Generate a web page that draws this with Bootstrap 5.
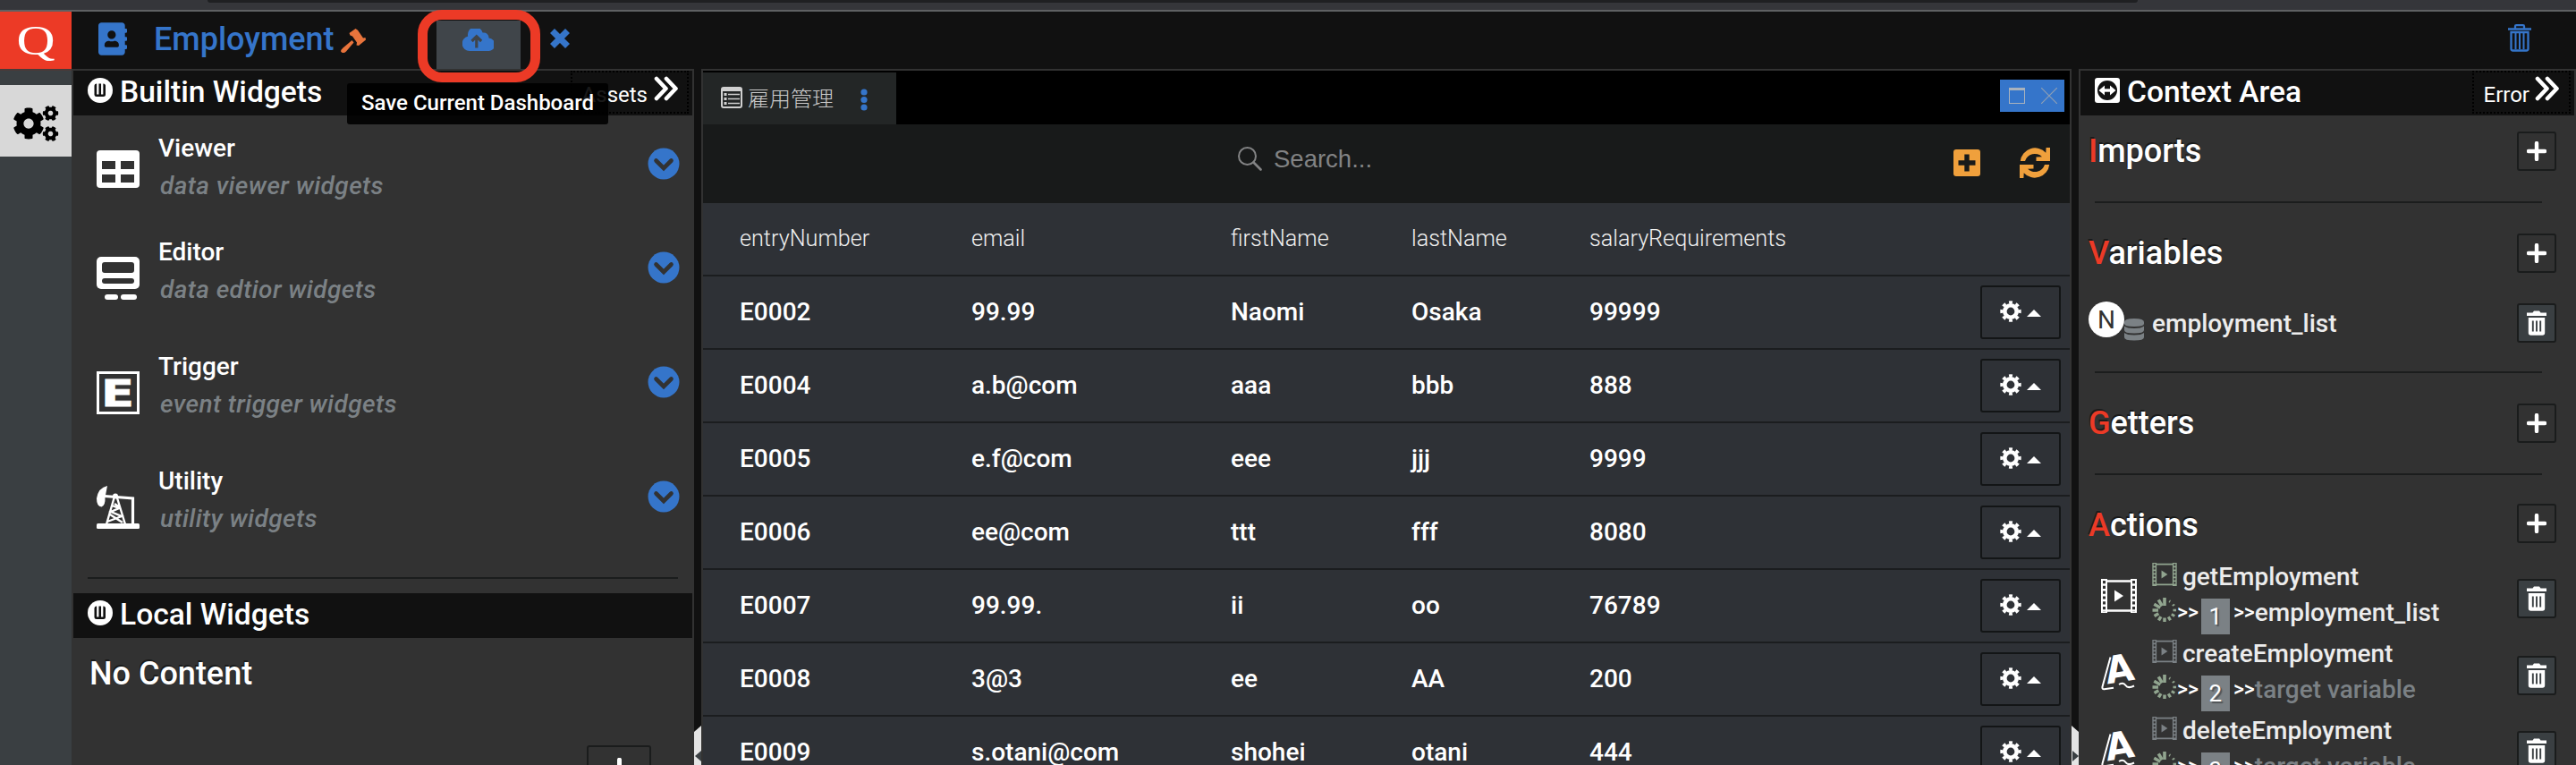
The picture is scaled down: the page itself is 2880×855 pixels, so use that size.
<!DOCTYPE html>
<html lang="ja">
<head>
<meta charset="utf-8">
<meta name="viewport" content="width=device-width, initial-scale=1">
<title>Employment</title>
<link href="https://cdn.jsdelivr.net/npm/bootstrap@5.3.0/dist/css/bootstrap.min.css" rel="stylesheet">
<style>
:root { --blue:#3575ca; --panel:#323232; --ink:#111111; --red:#ec3a26; --muted2:#7b8185; }
html, body { height:855px; overflow:hidden; }
body { background:var(--ink); color:#fff; font-family:Roboto,"Noto Sans CJK JP",sans-serif; font-weight:500; font-size:28px; line-height:42px; }
svg { display:block; flex:none; }
.chrome { height:13px; background:#35363a; border-bottom:2px solid #5f6163; padding:0 490px 0 232px; }
.chrome > div { height:3px; background:#1f2022; border-radius:0 0 8px 8px; }
.topbar { height:64px; background:var(--ink); }
.brand-q { width:80px; height:64px; background:var(--red); font-family:"Liberation Serif",serif; font-weight:400; font-size:47px; line-height:64px; }
.brand-q span { display:inline-block; transform:scaleX(1.27); }
.page-name { color:var(--blue); font-size:36px; line-height:44px; margin-left:30px; margin-top:-1px; }
.save-btn { width:94px; height:54px; margin-top:10px; background:#40454a; padding:9px 0 0 29px; }
.mark-ring { position:absolute; left:-21px; top:-2px; width:137px; height:81px; border:11px solid var(--red); border-radius:27px; z-index:5; }
.tip { position:absolute; left:-100px; top:80px; width:292px; height:46px; border-radius:3px; background:rgba(0,0,0,.9); font-size:24px; line-height:44px; z-index:4; white-space:nowrap; text-align:center; }
.rail { width:80px; background:#3a3f42; border-top:2px solid #4a3a38; padding-top:16px; }
.rail > div { height:80px; background:#d8d8d8; }
.side { background:var(--panel); padding:2px; overflow:hidden; }
.side-left { width:696px; }
.side-right { width:556px; }
.split { width:8px; background:var(--ink); position:relative; }
.split::before { content:""; position:absolute; left:0; right:0; bottom:0; height:44px; background:#e4e4e4; }
.split-l::before { clip-path:polygon(0 7px,100% 0,100% 100%,0 100%); }
.split-r::before { clip-path:polygon(0 0,100% 7px,100% 100%,0 100%); }
.split svg { position:absolute; bottom:4px; left:1px; }
.bar { height:50px; background:var(--ink); padding-left:16px; font-size:33.6px; line-height:50px; }
.bar .cap { margin-left:8px; margin-top:-1px; }
.bar-btn { height:48px; border:2px dotted #000; font-size:24px; line-height:50px; font-weight:400; padding:0 9px 0 11px; margin-right:4px; }
.wgt { height:128px; padding-left:26px; }
.wgt .txt { margin-left:21px; flex:1; }
.wgt em { color:var(--muted2); display:block; margin-left:2px; letter-spacing:.42px; }
.wgt .ico { margin-top:26px; }
.wgt .dn { margin:20px 14px 0 0; }
.rule { height:2px; background:#1b1d1d; margin:0 16px; }
.big { font-size:36px; line-height:44px; text-shadow:-1px -2px 0 rgba(10,12,12,.6); }
.sq { width:44px; height:44px; border:2px solid #1a1c1c; border-radius:3px; display:flex; align-items:center; justify-content:center; flex:none; }
.sq.fill { background:#3a3f42; }
.center { width:1532px; border:2px solid var(--panel); border-bottom:0; background:#000; overflow:hidden; }
.tabs { height:60px; padding-top:2px; }
.tab1 { width:216px; background:#232626; color:#c9c9c9; font-size:24px; font-weight:300; line-height:60px; padding-left:20px; }
.winbtns { width:72px; height:36px; background:var(--blue); margin:8px 6px 0 0; padding:0 8px 0 10px; }
.tools { height:88px; background:#181a1a; }
.hint { color:#828384; font-family:"Liberation Sans",sans-serif; font-size:27.5px; font-weight:400; }
.grid { table-layout:fixed; width:1528px; border-collapse:separate; border-spacing:0; background:#2e3136; }
.grid th, .grid td { height:82px; border-bottom:2px solid #1b1d1f; padding:1px 0 0; vertical-align:middle; }
.grid th { font-weight:300; font-size:25.2px; color:#f0f0f0; }
.grid th:first-child, .grid td:first-child { padding-left:41px; }
.rowbtn { width:90px; height:60px; border:2px solid #131516; border-radius:3px; margin:0 10px 0 auto; padding:0 20px 3px 20px; }
.ctx { padding:0 20px 0 9px; }
.ctx b { color:var(--red); font-weight:500; }
.ctx .rule { margin:34px 16px 34px 7px; }
.nn { width:40px; height:40px; border-radius:50%; background:#fff; color:#323232; font-size:28px; font-weight:400; line-height:41px; text-align:center; margin-top:-2px; }
.soft { color:#ececec; }
.act { height:86px; padding-left:14px; line-height:40px; }
.act .ico { margin-top:22px; }
.act .body2 { margin-left:17px; flex:1; }
.act .sq { margin-top:22px; }
.gt { font-size:23px; font-weight:500; }
.num { width:32px; height:40px; background:#7b8185; color:#fff; text-align:center; font-size:26px; font-weight:400; margin:4px 4px -4px 3px; text-shadow:2px 2px 1px rgba(0,0,0,.35); }
.dim { color:var(--muted2); }
.addlocal { width:72px; height:50px; border:2px solid #1a1c1c; border-radius:3px; margin:58px 46px 0 auto; padding-top:12px; }
</style>
</head>
<body class="d-flex flex-column">
<svg width="0" height="0" class="position-absolute">
  <symbol id="gear6" viewBox="0 0 512 512"><path fill="currentColor" d="M487.4 315.7l-42.6-24.6c4.3-23.2 4.3-47 0-70.2l42.6-24.6c4.9-2.8 7.1-8.6 5.5-14-11.1-35.6-30-67.8-54.7-94.6-3.8-4.1-10-5.1-14.8-2.3L380.8 110c-17.9-15.4-38.5-27.3-60.8-35.1V25.8c0-5.6-3.9-10.5-9.4-11.7-36.7-8.2-74.3-7.8-109.2 0-5.5 1.2-9.4 6.1-9.4 11.7V75c-22.2 7.9-42.8 19.8-60.8 35.1L88.7 85.5c-4.9-2.8-11-1.9-14.8 2.3-24.7 26.7-43.6 58.9-54.7 94.6-1.7 5.4.6 11.2 5.5 14L67.3 221c-4.3 23.2-4.3 47 0 70.2l-42.6 24.6c-4.9 2.8-7.1 8.6-5.5 14 11.1 35.6 30 67.8 54.7 94.6 3.8 4.1 10 5.1 14.8 2.3l42.6-24.6c17.9 15.4 38.5 27.3 60.8 35.1v49.2c0 5.6 3.9 10.5 9.4 11.7 36.7 8.2 74.3 7.8 109.2 0 5.5-1.2 9.4-6.1 9.4-11.7v-49.2c22.2-7.9 42.8-19.8 60.8-35.1l42.6 24.6c4.9 2.8 11 1.9 14.8-2.3 24.7-26.7 43.6-58.9 54.7-94.6 1.5-5.5-.7-11.3-5.6-14.1zM256 336c-44.1 0-80-35.9-80-80s35.9-80 80-80 80 35.9 80 80-35.9 80-80 80z"/></symbol>
  <symbol id="gear8" viewBox="0 0 24 24"><g fill="none" stroke="#fff"><circle cx="12" cy="12" r="6.7" stroke-width="4.6"/><circle cx="12" cy="12" r="10" stroke-width="3.4" pathLength="80" stroke-dasharray="5 5" stroke-dashoffset="2.5"/></g></symbol>
  <symbol id="plus" viewBox="0 0 22 22"><path d="M11 2v18M2 11h18" stroke="#fff" stroke-width="4.4" stroke-linecap="round"/></symbol>
  <symbol id="dbl" viewBox="0 0 28 28"><path d="M3 3l10.500 11L3 25M14 3l10.500 11L14 25" fill="none" stroke="#fff" stroke-width="4.600" stroke-linecap="round" stroke-linejoin="round"/></symbol>
  <symbol id="down" viewBox="0 0 36 36"><circle cx="18" cy="18" r="17.500" fill="#3575ca"/><path d="M9.500 14.500l8.500 8.500 8.500-8.500" fill="none" stroke="#323232" stroke-width="4.600" stroke-linecap="round"/></symbol>
  <symbol id="widget" viewBox="0 0 28 28"><circle cx="14" cy="14" r="14" fill="#fff"/><rect x="7.500" y="6.500" width="12.500" height="14.500" rx="2.500" fill="#111"/><path d="M11.300 5.500v13M16.200 5.500v13" stroke="#fff" stroke-width="2.300"/></symbol>
  <symbol id="trash" viewBox="0 0 22 28"><path d="M0 2.500h6.500L8 .5h6l1.500 2H22V6H0zM1.800 8h18.400v17a2.800 2.800 0 0 1-2.800 2.800H4.600A2.800 2.800 0 0 1 1.800 25z" fill="#fff"/><path d="M6.800 11.500v12M11 11.500v12M15.200 11.500v12" stroke="#3a3f42" stroke-width="1.900"/></symbol>
  <symbol id="film" viewBox="0 0 40 38"><rect x="0" y="0" width="7" height="38" fill="currentColor"/><rect x="33" y="0" width="7" height="38" fill="currentColor"/><path d="M6 2.500h28M6 35.500h28" stroke="currentColor" stroke-width="2.600"/><path d="M3.500 2v35M36.500 2v35" stroke="#323232" stroke-width="3" stroke-dasharray="3.200 2.600"/><path d="M15 12.500l10 6.500-10 6.500z" fill="currentColor"/></symbol>
  <symbol id="spin" viewBox="0 0 28 28"><g stroke="#91a58f" stroke-linecap="butt"><path d="M14 0v9" stroke-width="3.600"/><path d="M14 .5v8" stroke-width="3.600" transform="rotate(-30 14 14)"/><path d="M14 .5v8" stroke-width="3.500" transform="rotate(-60 14 14)"/><path d="M14 .5v6.500" stroke-width="3.500" transform="rotate(-90 14 14)"/><path d="M14 .8v5.500" stroke-width="3.500" transform="rotate(-120 14 14)"/><path d="M14 .8v5" stroke-width="3.500" transform="rotate(-150 14 14)"/><path d="M14 1v4.500" stroke-width="3.500" transform="rotate(180 14 14)"/><path d="M14 1v4.500" stroke-width="3.200" transform="rotate(150 14 14)"/><path d="M14 1v4" stroke-width="3" transform="rotate(120 14 14)"/><path d="M14 1v3.500" stroke-width="2.600" transform="rotate(90 14 14)"/><path d="M14 1v3" stroke-width="2" transform="rotate(60 14 14)"/><path d="M14 1v3" stroke-width="1.200" transform="rotate(30 14 14)"/></g></symbol>
  <symbol id="assign" viewBox="0 0 40 41"><text x="0" y="0" transform="translate(7 33.500) rotate(-9)" font-family="DejaVu Sans" font-weight="700" font-size="42" textLength="32" lengthAdjust="spacingAndGlyphs" fill="#fff">A</text><path d="M10.500 3.500L1.500 36.500q-.5 3 2 2.800L14 37.700M20 34q5-3 7.500 1t9.500.5" fill="none" stroke="#fff" stroke-width="2"/></symbol>
</svg>

<div class="chrome"><div></div></div>
<header class="topbar d-flex flex-shrink-0">
  <div class="brand-q text-center"><span>Q</span></div>
  <div class="d-flex align-items-center">
    <svg width="32" height="37" viewBox="0 0 448 512" style="margin-left:30px;margin-top:-3px"><path fill="#3575ca" d="M436 160c6.600 0 12-5.400 12-12v-40c0-6.600-5.400-12-12-12h-20V48c0-26.500-21.500-48-48-48H48C21.500 0 0 21.500 0 48v416c0 26.500 21.500 48 48 48h320c26.500 0 48-21.500 48-48v-48h20c6.600 0 12-5.400 12-12v-40c0-6.600-5.400-12-12-12h-20v-64h20c6.600 0 12-5.400 12-12v-40c0-6.600-5.400-12-12-12h-20v-64h20zm-228-32c35.300 0 64 28.700 64 64s-28.700 64-64 64-64-28.700-64-64 28.700-64 64-64zm112 236.800c0 10.600-10 19.200-22.400 19.200H118.400C106 384 96 375.400 96 364.800v-19.200c0-31.800 30.100-57.600 67.200-57.600h5c12.300 5.100 25.700 8 39.800 8s27.600-2.900 39.800-8h5c37.100 0 67.200 25.800 67.200 57.600v19.200z"/></svg>
    <div class="page-name" style="width:207px">Employment</div>
    <svg width="28" height="28" viewBox="0 0 28 28" style="margin-left:2px;margin-top:3px"><g fill="#e8743c"><path d="M12.500 13l-10 8.500q-4 3.500-1.500 5t5-1l8.500-10z"/><path d="M9.500 5l7-5 2.500 1.800 6 8.700 2.500-.5.500 2.500-8 6.500-2.500-.5.500-3-5-7-2.500-1z"/></g></svg>
  </div>
  <div class="position-relative" style="margin-left:79px">
    <div class="save-btn"><svg width="35" height="25" viewBox="0 0 35 25"><path fill="#3575ca" d="M29.500 10.400A5.600 5.600 0 0 0 22.600 4.600 8.200 8.200 0 0 0 6.200 8.600 8.300 8.300 0 0 0 8 25h20.500a7.300 7.300 0 0 0 1-14.600z"/><path d="M15.800 21.500v-12M10.500 14l5.300-5.300L21.100 14" fill="none" stroke="#40454a" stroke-width="3.200"/></svg></div>
    <div class="mark-ring"></div>
    <div class="tip">Save Current Dashboard</div>
  </div>
  <svg width="24" height="24" viewBox="0 0 24 24" style="margin:18px 0 0 32px"><path d="M3.500 3.500l17 17M20.500 3.500l-17 17" stroke="#3575ca" stroke-width="7"/></svg>
  <svg class="ms-auto" width="26" height="31" viewBox="0 0 26 31" style="margin-right:50px;margin-top:14px"><g fill="none" stroke="#3575ca" stroke-width="2.300"><path d="M0 5.500h26M8 5V2.500q0-1.300 1.300-1.300h7.400q1.300 0 1.300 1.300V5"/><path d="M3.500 9v18.500q0 2 2 2h15q2 0 2-2V9z"/><path d="M8.500 10v18M13 10v18M17.500 10v18" stroke-width="2"/></g></svg>
</header>

<main class="d-flex flex-grow-1" style="min-height:0">
  <aside class="rail"><div><svg width="80" height="80" viewBox="0 0 80 80" color="#000"><use href="#gear6" x="14" y="25" width="36" height="36"/><g transform="rotate(30 56.500 31.500)"><use href="#gear6" x="47.500" y="22.500" width="18" height="18"/></g><g transform="rotate(30 56.500 54.500)"><use href="#gear6" x="47.500" y="45.500" width="18" height="18"/></g></svg></div></aside>

  <section class="side side-left">
    <div class="bar d-flex"><svg width="28" height="28" class="mt-2"><use href="#widget"/></svg><div class="cap">Builtin Widgets</div>
      <div class="bar-btn d-flex ms-auto">Assets<svg width="28" height="28" style="margin:4px 0 0 7px"><use href="#dbl"/></svg></div></div>
    <div style="height:16px"></div>
    <div class="wgt d-flex" style="height:116px"><svg class="ico" style="margin-top:23px" width="48" height="42" viewBox="0 0 48 42"><rect width="48" height="42" rx="4" fill="#fff"/><path d="M6 12h15v9H6zM27 12h15v9H27zM6 27h15v9H6zM27 27h15v9H27z" fill="#323232"/></svg>
      <div class="txt">Viewer<em>data viewer widgets</em></div><svg class="dn" width="36" height="36"><use href="#down"/></svg></div>
    <div class="wgt d-flex"><svg class="ico" width="48" height="48" viewBox="0 0 48 48"><rect width="48" height="36" rx="5" fill="#fff"/><rect x="6" y="6" width="36" height="12" rx="3" fill="#323232"/><rect x="6" y="24" width="36" height="6" rx="3" fill="#323232"/><rect x="9" y="42" width="15" height="6" rx="3" fill="#fff"/><rect x="27" y="42" width="18" height="6" rx="3" fill="#fff"/></svg>
      <div class="txt">Editor<em>data edtior widgets</em></div><svg class="dn" width="36" height="36"><use href="#down"/></svg></div>
    <div class="wgt d-flex"><svg class="ico" width="48" height="48" viewBox="0 0 48 48"><rect x="1.500" y="1.500" width="45" height="45" fill="none" stroke="#fff" stroke-width="3"/><text x="5" y="39" font-family="DejaVu Sans" font-weight="700" font-size="41" textLength="37" lengthAdjust="spacingAndGlyphs" fill="#fff" stroke="#fff" stroke-width=".8">E</text></svg>
      <div class="txt">Trigger<em>event trigger widgets</em></div><svg class="dn" width="36" height="36"><use href="#down"/></svg></div>
    <div class="wgt d-flex"><svg class="ico" width="48" height="48" viewBox="0 0 48 48"><rect y="42" width="48" height="6" rx="1.500" fill="#fff"/><path d="M12 0Q2 2 0 14q0 9 5.500 9.500Q10 22 9.500 13z" fill="#fff"/><path d="M9 11.500l31.500 2.500V43" fill="none" stroke="#fff" stroke-width="3.200"/><path d="M20 12L11 43M22.500 12L32 43M17 22l8 3-9 4 12 5-16 6M20 20l6 4M15 32l14 9" fill="none" stroke="#fff" stroke-width="2.400"/><circle cx="21" cy="11.500" r="3" fill="#fff"/></svg>
      <div class="txt">Utility<em>utility widgets</em></div><svg class="dn" width="36" height="36"><use href="#down"/></svg></div>
    <div class="rule"></div>
    <div class="bar d-flex" style="margin-top:16px"><svg width="28" height="28" class="mt-2"><use href="#widget"/></svg><div class="cap">Local Widgets</div></div>
    <div class="big" style="margin:18px 0 0 18px">No Content</div>
    <div class="addlocal d-flex justify-content-center"><svg width="25" height="25"><use href="#plus"/></svg></div>
  </section>

  <div class="split split-l"><svg width="7" height="12"><path d="M7 0v12L0 6z" fill="#3a3f42"/></svg></div>

  <section class="center">
    <div class="tabs d-flex">
      <div class="tab1 d-flex"><svg width="24" height="24" viewBox="0 0 24 24" style="margin:16px 6px 0 0"><rect x="1" y="1" width="22" height="22" rx="2" fill="none" stroke="#d0d0d0" stroke-width="2"/><path d="M1 3h22" stroke="#d0d0d0" stroke-width="4"/><path d="M3.500 8.500h3M3.500 13.500h3M3.500 18.500h3" stroke="#d0d0d0" stroke-width="2.800"/><path d="M8 8.500h13M8 13.500h13M8 18.500h13" stroke="#d0d0d0" stroke-width="1.500"/></svg>雇用管理<svg width="8" height="26" viewBox="0 0 8 26" style="margin:18px 0 0 30px"><g fill="#3575ca"><circle cx="4" cy="4" r="3.600"/><circle cx="4" cy="12.500" r="3.600"/><circle cx="4" cy="21" r="3.600"/></g></svg></div>
      <div class="winbtns d-flex ms-auto justify-content-between align-items-center"><svg width="18" height="18" viewBox="0 0 18 18"><rect x=".5" y="1" width="17" height="16.500" fill="none" stroke="#a9b2bd"/><path d="M0 1.500h18" stroke="#a9b2bd" stroke-width="3"/></svg><svg width="18" height="18" viewBox="0 0 18 18"><path d="M0 0l18 18M18 0L0 18" stroke="#8f9fb4" stroke-width="1.200"/></svg></div>
    </div>
    <div class="tools d-flex"><svg width="27" height="27" viewBox="0 0 27 27" style="margin:25px 0 0 598px"><circle cx="10.500" cy="10.500" r="9.500" fill="none" stroke="#828384" stroke-width="2"/><path d="M17.500 17.500l8 8" stroke="#828384" stroke-width="2.600" stroke-linecap="round"/></svg>
      <div class="hint" style="margin:18px 0 0 13px">Search...</div>
      <svg class="ms-auto" width="30" height="30" viewBox="0 0 30 30" style="margin-top:28px"><rect width="30" height="30" rx="3" fill="#f0a03c"/><path d="M15 5.500v19M5.500 15h19" stroke="#181a1a" stroke-width="5.400"/></svg>
      <svg width="34" height="34" viewBox="0 0 34 34" style="margin:26px 22px 0 44px"><g fill="#f0a03c"><path id="halfsync" d="M34 0v15H18.500v-4.500l6.500-.3A11.500 11.500 0 0 0 6 15H.8A16.400 16.400 0 0 1 29.300 5.800L29.600 0z"/><use href="#halfsync" transform="rotate(180 17 17)"/></g></svg>
    </div>
    <table class="grid">
      <colgroup><col style="width:300px"><col style="width:290px"><col style="width:202px"><col style="width:199px"><col style="width:300px"><col></colgroup>
      <thead><tr><th>entryNumber</th><th>email</th><th>firstName</th><th>lastName</th><th>salaryRequirements</th><th></th></tr></thead>
      <tbody>
        <tr><td>E0002</td><td>99.99</td><td>Naomi</td><td>Osaka</td><td>99999</td><td><div class="rowbtn d-flex align-items-center justify-content-between"><svg width="24" height="24"><use href="#gear8"/></svg><svg width="16" height="8" class="mt-1"><path d="M0 8l8-8 8 8z" fill="#fff"/></svg></div></td></tr>
        <tr><td>E0004</td><td>a.b@com</td><td>aaa</td><td>bbb</td><td>888</td><td><div class="rowbtn d-flex align-items-center justify-content-between"><svg width="24" height="24"><use href="#gear8"/></svg><svg width="16" height="8" class="mt-1"><path d="M0 8l8-8 8 8z" fill="#fff"/></svg></div></td></tr>
        <tr><td>E0005</td><td>e.f@com</td><td>eee</td><td>jjj</td><td>9999</td><td><div class="rowbtn d-flex align-items-center justify-content-between"><svg width="24" height="24"><use href="#gear8"/></svg><svg width="16" height="8" class="mt-1"><path d="M0 8l8-8 8 8z" fill="#fff"/></svg></div></td></tr>
        <tr><td>E0006</td><td>ee@com</td><td>ttt</td><td>fff</td><td>8080</td><td><div class="rowbtn d-flex align-items-center justify-content-between"><svg width="24" height="24"><use href="#gear8"/></svg><svg width="16" height="8" class="mt-1"><path d="M0 8l8-8 8 8z" fill="#fff"/></svg></div></td></tr>
        <tr><td>E0007</td><td>99.99.</td><td>ii</td><td>oo</td><td>76789</td><td><div class="rowbtn d-flex align-items-center justify-content-between"><svg width="24" height="24"><use href="#gear8"/></svg><svg width="16" height="8" class="mt-1"><path d="M0 8l8-8 8 8z" fill="#fff"/></svg></div></td></tr>
        <tr><td>E0008</td><td>3@3</td><td>ee</td><td>AA</td><td>200</td><td><div class="rowbtn d-flex align-items-center justify-content-between"><svg width="24" height="24"><use href="#gear8"/></svg><svg width="16" height="8" class="mt-1"><path d="M0 8l8-8 8 8z" fill="#fff"/></svg></div></td></tr>
        <tr><td>E0009</td><td>s.otani@com</td><td>shohei</td><td>otani</td><td>444</td><td><div class="rowbtn d-flex align-items-center justify-content-between"><svg width="24" height="24"><use href="#gear8"/></svg><svg width="16" height="8" class="mt-1"><path d="M0 8l8-8 8 8z" fill="#fff"/></svg></div></td></tr>
      </tbody>
    </table>
  </section>

  <div class="split split-r"><svg width="7" height="12"><path d="M0 0v12l7-6z" fill="#3a3f42"/></svg></div>

  <section class="side side-right">
    <div class="bar d-flex"><svg width="28" height="28" viewBox="0 0 28 28" class="mt-2"><rect width="28" height="28" rx="3" fill="#fff"/><circle cx="14" cy="14" r="11" fill="#111"/><path d="M8 14h12" stroke="#fff" stroke-width="3.400"/><path d="M11 8.500v11L4.500 14zM17 8.500v11l6.500-5.500z" fill="#fff"/></svg><div class="cap">Context Area</div>
      <div class="bar-btn d-flex ms-auto" style="padding-right:10px">Error<svg width="28" height="28" style="margin:4px 0 0 6px"><use href="#dbl"/></svg></div></div>
    <div class="ctx">
      <div class="d-flex justify-content-between" style="margin-top:18px"><div class="big"><b>I</b>mports</div><div class="sq"><svg width="22" height="22"><use href="#plus"/></svg></div></div>
      <div class="rule"></div>
      <div class="d-flex justify-content-between"><div class="big"><b>V</b>ariables</div><div class="sq"><svg width="22" height="22"><use href="#plus"/></svg></div></div>
      <div class="d-flex" style="margin-top:34px"><div class="nn">N</div><svg width="22" height="25" viewBox="0 0 22 25" style="margin-top:17px"><g fill="#7b8185"><path d="M0 4q0-4 11-4t11 4v2q0 3-11 3T0 6z"/><path d="M0 8.500Q3 11 11 11t11-2.500V13q0 3.500-11 3.500T0 13z"/><path d="M0 16q3 2.500 11 2.500T22 16v5q0 3.500-11 3.500T0 21z"/></g></svg><div class="soft flex-grow-1" style="margin-left:9px;padding-top:2px">employment_list</div><div class="sq fill"><svg width="22" height="28"><use href="#trash"/></svg></div></div>
      <div class="rule" style="margin-top:32px"></div>
      <div class="d-flex justify-content-between"><div class="big"><b>G</b>etters</div><div class="sq"><svg width="22" height="22"><use href="#plus"/></svg></div></div>
      <div class="rule" style="margin-bottom:32px"></div>
      <div class="d-flex justify-content-between" style="height:44px"><div class="big" style="padding-top:2px">
        <b>A</b>ctions</div><div class="sq"><svg width="22" height="22"><use href="#plus"/></svg></div></div>
      <div class="act d-flex" style="margin-top:18px"><svg class="ico" width="40" height="38"><use href="#film"/></svg>
        <div class="body2"><div class="d-flex"><svg width="28" height="26" style="margin-top:4px;color:#91a58f"><use href="#film"/></svg><div class="soft" style="margin-left:6px">getEmployment</div></div>
          <div class="d-flex"><svg width="28" height="28" style="margin-top:3px"><use href="#spin"/></svg><span class="gt">&gt;&gt;</span><div class="num">1</div><span class="gt">&gt;&gt;</span><span class="soft">employment_list</span></div></div>
        <div class="sq fill"><svg width="22" height="28"><use href="#trash"/></svg></div></div>
      <div class="act d-flex"><svg class="ico" style="margin-top:20px" width="40" height="41"><use href="#assign"/></svg>
        <div class="body2"><div class="d-flex"><svg width="28" height="26" style="margin-top:4px;color:#7b8185"><use href="#film"/></svg><div class="soft" style="margin-left:6px">createEmployment</div></div>
          <div class="d-flex"><svg width="28" height="28" style="margin-top:3px"><use href="#spin"/></svg><span class="gt">&gt;&gt;</span><div class="num">2</div><span class="gt">&gt;&gt;</span><span class="dim">target variable</span></div></div>
        <div class="sq fill"><svg width="22" height="28"><use href="#trash"/></svg></div></div>
      <div class="act d-flex"><svg class="ico" style="margin-top:20px" width="40" height="41"><use href="#assign"/></svg>
        <div class="body2"><div class="d-flex"><svg width="28" height="26" style="margin-top:4px;color:#7b8185"><use href="#film"/></svg><div class="soft" style="margin-left:6px">deleteEmployment</div></div>
          <div class="d-flex"><svg width="28" height="28" style="margin-top:3px"><use href="#spin"/></svg><span class="gt">&gt;&gt;</span><div class="num">3</div><span class="gt">&gt;&gt;</span><span class="dim">target variable</span></div></div>
        <div class="sq fill" style="margin-top:20px"><svg width="22" height="28"><use href="#trash"/></svg></div></div>
    </div>
  </section>
</main>
<script src="https://cdn.jsdelivr.net/npm/bootstrap@5.3.0/dist/js/bootstrap.bundle.min.js"></script>
</body>
</html>
